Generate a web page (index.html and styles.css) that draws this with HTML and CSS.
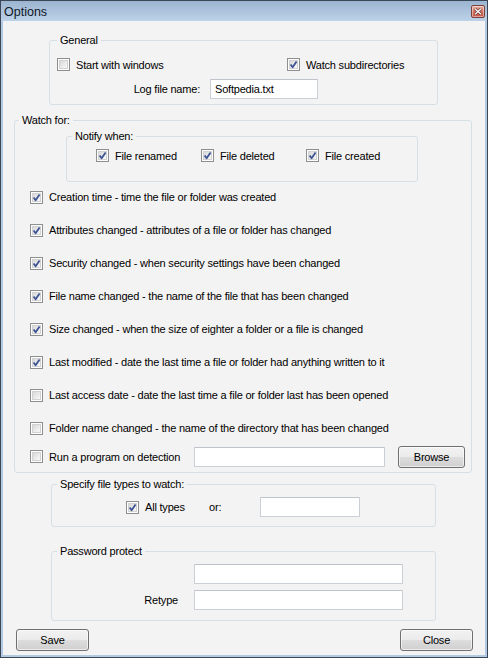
FILE: index.html
```html
<!DOCTYPE html>
<html>
<head>
<meta charset="utf-8">
<title>Options</title>
<link rel="stylesheet" href="styles.css">
</head>
<body>
<svg class="defs" width="0" height="0" aria-hidden="true">
  <defs>
    <linearGradient id="cbg" x1="0" y1="0" x2="1" y2="1">
      <stop offset="0" stop-color="#d6d6d6"/>
      <stop offset="1" stop-color="#fbfbfb"/>
    </linearGradient>
    <symbol id="box" viewBox="0 0 13 13">
      <rect x="0.5" y="0.5" width="12" height="12" fill="#fdfdfd" stroke="#8e8f8f"/>
      <rect x="2.5" y="2.5" width="8" height="8" fill="url(#cbg)" stroke="#d2d2d2"/>
    </symbol>
    <symbol id="chk" viewBox="0 0 13 13">
      <use href="#box"/>
      <path d="M3.6 6.4 L5.6 9.2 L9.6 3.4" fill="none" stroke="#3d5393" stroke-width="1.8" stroke-linejoin="round"/>
    </symbol>
  </defs>
</svg>

<div class="window">
  <div class="titlebar">
    <span class="title">Options</span>
    <span class="xbtn">
      <svg width="8" height="7" viewBox="0 0 8 7"><path d="M1 0.8 L7 6.2 M7 0.8 L1 6.2" stroke="#5a2a24" stroke-width="2.6"/><path d="M1 0.8 L7 6.2 M7 0.8 L1 6.2" stroke="#ffffff" stroke-width="1.4"/></svg>
    </span>
  </div>

  <div class="client">
    <fieldset class="group g-general">
      <legend class="lg7">General</legend>
      <div class="row gen-row1">
        <label class="cbl w230"><svg class="cb"><use href="#box"/></svg><span>Start with windows</span></label>
        <label class="cbl"><svg class="cb"><use href="#chk"/></svg><span>Watch subdirectories</span></label>
      </div>
      <div class="row gen-row2">
        <span class="rlabel w150">Log file name:</span>
        <span class="input w108">Softpedia.txt</span>
      </div>
    </fieldset>

    <fieldset class="group g-watch">
      <legend class="lg4">Watch for:</legend>
      <fieldset class="group g-notify">
        <legend class="lg5">Notify when:</legend>
        <div class="row notify-row">
          <label class="cbl w105"><svg class="cb"><use href="#chk"/></svg><span>File renamed</span></label>
          <label class="cbl w105"><svg class="cb"><use href="#chk"/></svg><span>File deleted</span></label>
          <label class="cbl w105"><svg class="cb"><use href="#chk"/></svg><span>File created</span></label>
        </div>
      </fieldset>
      <div class="list">
        <label class="cbl item"><svg class="cb"><use href="#chk"/></svg><span>Creation time - time the file or folder was created</span></label>
        <label class="cbl item"><svg class="cb"><use href="#chk"/></svg><span>Attributes changed - attributes of a file or folder has changed</span></label>
        <label class="cbl item"><svg class="cb"><use href="#chk"/></svg><span>Security changed - when security settings have been changed</span></label>
        <label class="cbl item"><svg class="cb"><use href="#chk"/></svg><span>File name changed - the name of the file that has been changed</span></label>
        <label class="cbl item"><svg class="cb"><use href="#chk"/></svg><span>Size changed - when the size of eighter a folder or a file is changed</span></label>
        <label class="cbl item"><svg class="cb"><use href="#chk"/></svg><span>Last modified - date the last time a file or folder had anything written to it</span></label>
        <label class="cbl item"><svg class="cb"><use href="#box"/></svg><span>Last access date - date the last time a file or folder last has been opened</span></label>
        <label class="cbl item"><svg class="cb"><use href="#box"/></svg><span>Folder name changed - the name of the directory that has been changed</span></label>
        <div class="row run-row">
          <label class="cbl"><svg class="cb"><use href="#box"/></svg><span class="w145">Run a program on detection</span></label>
          <span class="input w191"></span>
          <span class="btn browse">Browse</span>
        </div>
      </div>
    </fieldset>

    <fieldset class="group g-types">
      <legend class="lg5">Specify file types to watch:</legend>
      <div class="row types-row">
        <label class="cbl"><svg class="cb"><use href="#chk"/></svg><span class="w64">All types</span></label>
        <span class="w51">or:</span>
        <span class="input w100"></span>
      </div>
    </fieldset>

    <fieldset class="group g-pass">
      <legend class="lg5">Password protect</legend>
      <div class="row pass-row1">
        <span class="input w209"></span>
      </div>
      <div class="row pass-row2">
        <span class="rlabel w126">Retype</span>
        <span class="input w209"></span>
      </div>
    </fieldset>

    <div class="actions">
      <span class="btn">Save</span>
      <span class="btn">Close</span>
    </div>
  </div>
</div>
</body>
</html>
```

FILE: styles.css
```css
html, body {
  margin: 0;
  padding: 0;
  background: #b7cde4;
}
.defs {
  position: absolute;
  width: 0;
  height: 0;
  overflow: hidden;
}
.window {
  width: 488px;
  height: 658px;
  box-sizing: border-box;
  border: 1px solid #3b4757;
  background: #b3c9e1;
  padding: 0 2px 2px 2px;
  display: flex;
  flex-direction: column;
  font-family: "Liberation Sans", Arial, sans-serif;
  font-size: 11px;
  color: #000;
}
.titlebar {
  height: 20px;
  margin: 0 -2px;
  padding: 0 2px 0 3px;
  display: flex;
  align-items: center;
  justify-content: space-between;
  background: linear-gradient(#9bb4d0, #bcd2e8);
}
.title {
  font-size: 12.5px;
  color: #111827;
  padding-top: 1px;
}
.xbtn {
  width: 14px;
  height: 13px;
  box-sizing: border-box;
  border: 1px solid #7b4038;
  border-radius: 2px;
  background: linear-gradient(#eab1a3, #d06b5a 55%, #c4574a);
  box-shadow: inset 0 0 0 1px rgba(255,255,255,0.45);
  display: flex;
  align-items: center;
  justify-content: center;
  margin-top: 1px;
}
.client {
  flex: 1;
  background: #f4f3f3;
  display: flex;
  flex-direction: column;
  align-items: flex-start;
  letter-spacing: -0.2px;
}
.group {
  margin: 0;
  padding: 0;
  border: 1px solid #d5dfe6;
  border-radius: 3px;
  box-sizing: border-box;
  min-width: 0;
}
.group legend {
  padding: 0 3px;
  line-height: 14px;
}
.lg7 { margin-left: 7px; }
.lg4 { margin-left: 4px; }
.lg5 { margin-left: 5px; }

.row {
  display: flex;
  align-items: center;
}
.cbl {
  display: flex;
  align-items: center;
  gap: 6px;
  white-space: nowrap;
}
.cb {
  width: 13px;
  height: 13px;
  flex: none;
}
.input {
  display: block;
  height: 20px;
  box-sizing: border-box;
  background: #fff;
  border: 1px solid #cbd0d6;
  border-top-color: #bfc4ca;
  border-radius: 1px;
  padding: 3px 0 0 4px;
  line-height: 13px;
  flex: none;
}
.btn {
  display: flex;
  align-items: center;
  justify-content: center;
  width: 73px;
  height: 22px;
  box-sizing: border-box;
  border: 1px solid #707070;
  border-radius: 3px;
  background: linear-gradient(#f2f2f2 0%, #ebebeb 50%, #dddddd 51%, #cfcfcf 100%);
  box-shadow: inset 0 0 0 1px rgba(255,255,255,0.6);
  flex: none;
}
.rlabel { text-align: right; display: block; }

.w230 { width: 230px; }
.w150 { width: 150px; }
.w108 { width: 108px; }
.w105 { width: 105px; }
.w145 { width: 145px; }
.w191 { width: 191px; }
.w64 { width: 64px; }
.w51 { width: 51px; }
.w100 { width: 100px; }
.w209 { width: 209px; }
.w126 { width: 126px; }

/* General */
.g-general {
  margin: 12px 0 0 46px;
  width: 389px;
  height: 72px;
}
.gen-row1 {
  margin-top: 11px;
  padding-left: 7px;
  height: 13px;
}
.gen-row2 {
  margin-top: 8px;
  height: 20px;
  gap: 10px;
}

/* Watch for */
.g-watch {
  margin: 8px 0 0 11px;
  width: 458px;
  height: 360px;
}
.g-notify {
  margin: 2px 0 0 51px;
  width: 352px;
  height: 53px;
}
.notify-row {
  margin-top: 6px;
  padding-left: 29px;
  height: 13px;
}
.list {
  display: flex;
  flex-direction: column;
}
.item {
  height: 33px;
  box-sizing: border-box;
  padding: 0 0 3px 15px;
}
.run-row {
  height: 21px;
  padding-left: 15px;
}
.browse {
  width: 67px;
  margin-left: 13px;
}

/* Types */
.g-types {
  margin: 4px 0 0 48px;
  width: 385px;
  height: 50px;
}
.types-row {
  margin-top: 6px;
  height: 20px;
  padding-left: 74px;
}

/* Password */
.g-pass {
  margin: 17px 0 0 48px;
  width: 385px;
  height: 77px;
}
.pass-row1 {
  margin-top: 6px;
  padding-left: 142px;
}
.pass-row2 {
  margin-top: 6px;
  gap: 16px;
}

.actions {
  align-self: stretch;
  display: flex;
  justify-content: space-between;
  margin: 8px 12px 0 13px;
}
```
